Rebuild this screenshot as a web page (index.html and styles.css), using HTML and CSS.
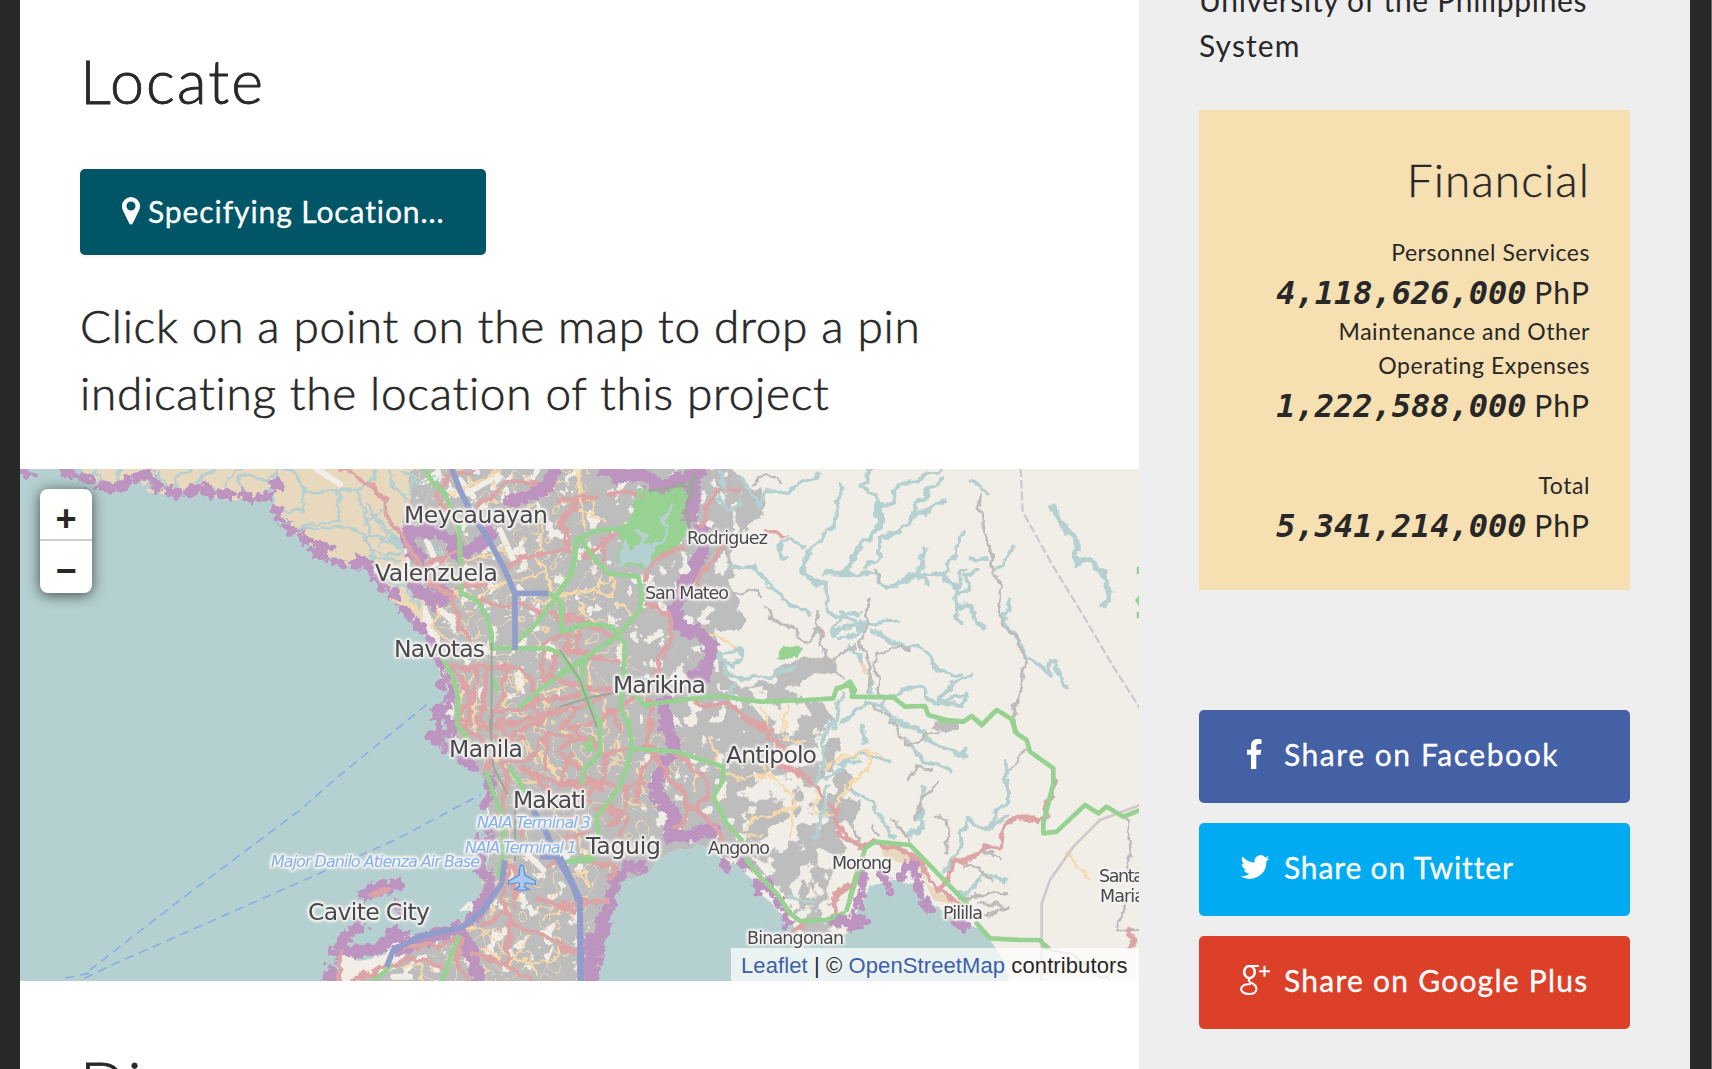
FILE: index.html
```html
<!DOCTYPE html>
<html lang="en">
<head>
<meta charset="utf-8">
<title>Project</title>
<link rel="stylesheet" href="styles.css">
</head>
<body>
<div class="page">
<main class="main">
  <section class="locate">
    <h2 class="title">Locate</h2>
    <button class="btn-locate"><svg class="pin" viewBox="0 0 18 28"><path fill-rule="evenodd" d="M9 0a9 9 0 0 1 9 9c0 2-.5 3.500-1.200 5L10.700 26.500c-.7 1.400-2.700 1.400-3.400 0L1.200 14C.5 12.500 0 11 0 9a9 9 0 0 1 9-9zm0 4.500a4.500 4.500 0 1 0 0 9 4.500 4.500 0 0 0 0-9z"/></svg><span>Specifying Location...</span></button>
    <p class="hint">Click on a point on the map to drop a pin<br>indicating the location of this project</p>
  </section>
  <div class="map">
    <svg class="tiles" viewBox="20 469 1119 512">
      <defs>
        <filter id="specks" x="0" y="0" width="1" height="1" color-interpolation-filters="sRGB"><feTurbulence type="fractalNoise" baseFrequency=".07" numOctaves="4" seed="4"/><feColorMatrix values="0 0 0 0 .945 0 0 0 0 .933 0 0 0 0 .91 22 0 0 0 -13.4"/><feComposite in2="SourceGraphic" operator="in"/></filter>
        <filter id="sprawl" x="0" y="0" width="1" height="1" color-interpolation-filters="sRGB"><feTurbulence type="fractalNoise" baseFrequency=".04" numOctaves="5" seed="9"/><feColorMatrix values="0 0 0 0 .945 0 0 0 0 .933 0 0 0 0 .91 24 0 0 0 -12"/><feComposite in2="SourceGraphic" operator="in"/></filter>
        <filter id="streets" x="0" y="0" width="1" height="1" color-interpolation-filters="sRGB"><feTurbulence type="fractalNoise" baseFrequency=".04" numOctaves="2" seed="21"/><feColorMatrix values="0 0 0 0 .97 0 0 0 0 .85 0 0 0 0 .67 1 0 0 0 0"/><feComponentTransfer><feFuncA type="discrete" tableValues="0 0 0 0 0 0 0 0 0 0 0 0 0 0 0 0 0 1 0 0 0 0 0 0 0 0 0 1 0 0 0 0 0 0 0 0 0 0 0 0"/></feComponentTransfer><feComposite in2="SourceGraphic" operator="in"/></filter>
        <filter id="rough" x="-.1" y="-.1" width="1.2" height="1.2"><feTurbulence type="fractalNoise" baseFrequency=".05" numOctaves="2" seed="2"/><feDisplacementMap in="SourceGraphic" scale="40" xChannelSelector="R" yChannelSelector="G"/></filter>
        <filter id="wobble" x="-.1" y="-.1" width="1.2" height="1.2"><feTurbulence type="fractalNoise" baseFrequency=".06" numOctaves="2" seed="6"/><feDisplacementMap in="SourceGraphic" scale="9" xChannelSelector="R" yChannelSelector="G"/></filter>
        <filter id="bend" x="-.1" y="-.1" width="1.2" height="1.2" color-interpolation-filters="sRGB"><feTurbulence type="fractalNoise" baseFrequency=".025" numOctaves="3" seed="8"/><feDisplacementMap in="SourceGraphic" scale="36" xChannelSelector="R" yChannelSelector="G"/></filter>
      </defs>
      <rect class="sea" x="20" y="469" width="1119" height="512"/>
      <!-- land masses -->
      <g filter="url(#wobble)">
        <path class="land" d="M80 455V478L115 488 137 478 150 493 200 492 228 501 262 498 272 482 275 510 300 538 325 555 350 565 367 560 375 580 400 605 420 630 432 650 440 670 450 690 445 712 452 735 475 765 490 785 486 830 488 870 480 900 465 922 410 938 395 930 385 955 360 960 345 945 335 981V995H597L605 950 613 885 650 872 665 855 695 845 712 850 735 865 755 880 762 895 785 915 800 935 845 935 860 905 870 885 900 880 920 885 927 903 945 912 960 922 980 930 992 945 1005 960 1015 995H1160V455z"/>
        <path class="farm" d="M80 455V478L115 488 137 478 150 493 200 492 228 501 262 498 272 482 275 510 300 538 325 555 350 565 367 560 390 590 420 625 425 605 405 560 402 520 420 500 410 455z"/>
        <path class="urban" d="M408 455 412 500 403 520 408 560 425 600 440 640 452 700 455 735 475 765 490 785 488 870 480 900 465 922 410 940 395 970 340 985 335 995H597L605 950 613 885 650 872 665 855 695 845 712 850 745 865 770 880 790 905 805 935 840 930 825 890 835 870 850 840 862 800 845 760 835 720 820 700 790 690 760 680 740 690 725 670 715 640 705 600 735 575 725 530 760 500 720 455z"/>
        <path class="urban" d="M715 465 740 500 760 485 765 505 745 530 730 555 725 580 740 600 730 615 745 620 735 630 715 630 710 660 725 690 715 700 690 600 700 500z"/>
      </g>
      <path filter="url(#sprawl)" d="M740 690 L800 680 870 700 870 760 860 860 835 935 800 925 770 880 745 850 740 800 770 770 780 740z"/>
      <path filter="url(#specks)" d="M410 469H750L745 570 715 610 720 690 640 690 560 600 560 700 500 720 480 700 440 620 410 560 405 520z M520 850 590 850 590 970 350 975 440 930z M640 690H770L780 740 750 800 760 850H770L640 840z"/>
      <path class="orange-net" filter="url(#streets)" d="M410 469H590L600 600 650 690 690 740 650 840 600 880 590 981H400L480 900 490 780 445 700 430 620z"/>
      <!-- delta channels and meadow rivers, north-west -->
      <g class="thin river" filter="url(#bend)" transform="translate(260 460) scale(.33333)">
        <path d="M80 25 130 80 180 105 220 90 290 95 340 55 350 25M130 80 130 150 60 155M220 90 240 110 235 180 190 185 120 205M110 210 220 205 260 195 320 240 340 300M370 150 330 180 320 240M320 130 350 170 370 210 420 250M330 230 400 240 420 260M330 260 380 290 430 270M350 300 420 300M400 200 360 250M390 30 400 90 440 120M430 30 470 70 530 50M460 70 440 100M480 200 520 270 560 290M350 350 430 380 480 440M390 330 460 390 500 430M330 180 310 150 290 95"/>
        <path d="M-570 70-540 30M-520 80-490 30-480 80M-440 70-420 25M-400 60-350 30M-340 100-330 40-290 60-270 100M-250 90-240 40-200 30M-220 90-180 50-130 30M-160 80-110 100-100 60-60 30M-50 90-70 60-30 40 20 70 60 25M-190 70-160 40M-300 30-310 70-340 80"/>
      </g>
      <!-- north-west quarter -->
      <g transform="translate(260 460) scale(.33333)">
        <path class="pale" d="M170 27 240 72M500 240 530 310M600 60 640 110M720 210 760 300M530 440 620 520M620 100 690 60"/>
        <g class="purple" filter="url(#rough)">
          <path class="coast" d="M-720 30-690 45M-590 25-560 45-520 60-480 75-430 90-390 55-330 40-310 80-250 100-200 95-190 70-150 100-60 100-20 120 30 105 50 65 70 85M45 145 60 185 120 230 170 255 215 262M165 275 240 310 290 315 320 285M320 300 340 340 370 380 400 400 430 445 460 480 490 510 520 560 540 610 560 660 520 690M580 690 570 740 520 750 540 790"/>
          <path class="wide" d="M430 215 470 290 500 350M430 215H540L580 250 600 290 680 240 700 200M740 130 860 85 890 20M450 370 530 430 570 390M490 320 550 400"/>
        </g>
        <g filter="url(#bend)">
        <path class="yellow" d="M570 100 640 75 700 40M860 170 830 280 880 400M640 420 720 370 850 340 870 390M540 440 520 500 580 550M960 30 950 150 990 160M600 300 700 280 740 260M830 430 990 390M400 420 470 440M640 640 600 700 610 790M740 640 850 700 920 680M650 660 640 800M740 670 730 740 850 790M850 650 860 800"/>
        <path class="red" d="M245 30 300 45 375 120 375 170 420 225 470 300 520 370 575 410 590 470 625 540M550 80 530 110 555 150M640 30 560 50 550 80M655 140 750 60 830 65M510 310 600 275M740 325 790 290 850 280 930 270 930 240 910 200 945 120 990 115M660 420 720 440 780 430 850 460 960 480 990 490M850 545 960 520 960 490M850 545 850 670M930 525 920 570 990 585M590 380 680 370M570 625 700 620 790 625 800 660 830 700 830 810M650 630 640 720 620 810M680 630 660 810M740 620 730 700 700 760 690 810M580 630 610 680 640 720 600 760M700 760 780 740 850 720 960 710M740 800 860 760 990 730M890 580 870 650 840 660M890 660 980 680M600 780 700 800 760 790"/>
        </g>
        <path class="green" d="M495 30 520 70 555 100 575 150 595 190 600 270 600 350 605 400 650 420 680 470 695 520 695 565 765 565 865 565 900 580 930 620 960 660 980 740M780 740 850 680 990 590M765 550 830 490 890 410 940 330 945 240 990 220M865 400 890 410 905 430 905 515 990 490M550 600 580 650 595 720 590 810M700 655 710 690"/>
        <path class="trunk" d="M695 550V810"/>
        <path class="blue" d="M575 25 600 90 640 170 680 230 730 320 765 400 765 570M765 400 865 400"/>
      </g>
      <!-- north centre: reservoir and Marikina valley -->
      <g transform="translate(560 460) scale(.33333)">
        <g filter="url(#bend)">
        <path class="town" d="M500 460 540 450 560 480 530 510zM770 500 785 500 795 530 775 535zM540 110 580 100 610 160 550 210 520 150z"/>
        <path class="scrub" d="M640 640 700 600 760 590 830 600 830 640 760 640 720 680 640 680z"/>
        <path class="park" d="M240 95 300 95 340 90 395 50 415 60 370 140 375 230 340 265 270 320 200 320 165 300 180 250 165 210 215 165z"/>
        <path class="lake" d="M165 310 190 230 220 270 250 240 225 210 270 225 255 265 300 240 320 200 305 180 340 125 315 240 280 270 270 315z"/>
        </g>
        <g class="purple" filter="url(#rough)"><path class="wide" d="M110 25 180 50 250 45 300 80 380 50 440 30M400 60 400 120 380 190M420 190 430 270 400 330 360 390 345 450 350 490 420 520 455 560 430 650 380 660M310 710 320 810"/></g>
        <g filter="url(#bend)">
        <path class="grey" d="M280 95 380 70M400 50 380 150 385 210"/>
        <path class="pale" d="M370 280 375 340M460 75 470 90M260 540 300 520"/>
        <path class="yellow" d="M50 30 65 90 60 150 75 200M65 110 100 130 100 170 130 190M0 410 60 390 160 405M120 350 120 400 160 400 160 350 120 370M170 430 210 450 225 470M450 530 490 540 530 565M60 430 100 480M95 600 90 680 140 730 130 800M610 740 630 810M680 730 680 810"/>
        <path class="red" d="M0 120 50 115 110 110M150 100 240 105M50 120 10 180 0 200 30 270M160 225 70 290M130 240V310M540 92 470 90 445 140 430 180 420 205M380 255 340 265 300 300 260 320 250 370M490 260 440 320 410 370M620 210 670 225M255 430 290 440 335 470 335 530 310 590 285 640M0 480 65 480 155 530M25 510 20 580 120 590 130 605 180 608M50 510 60 580M0 660 60 680 160 690M0 800 60 740 150 700M20 810 140 770 230 710M270 720 270 810M410 720 440 740 520 735 560 780 620 810M160 760 180 810"/>
        <path class="greyline" d="M510 405 590 385 600 410M610 440 640 480 700 510 740 545 775 510 770 460M775 510 800 610 850 660M800 600 890 560M580 70 620 40 660 70M480 40 440 80 500 95"/>
        <path class="river" d="M550 60 600 140 620 90 680 95 720 60 760 55 780 40M845 75 830 130 830 180 800 220 760 270 730 290 730 340 770 375 800 370 800 460 850 470 900 460M670 240 660 290 680 290M680 240 730 265M790 335 860 340 880 290 900 260M515 320 580 325 640 380 680 430 740 460M480 600 520 620 550 570 480 580 500 640 560 660 640 650 700 620M520 670 510 720M470 110 510 150 540 130M480 30 490 90M800 370 740 350M850 470 820 520 900 490M850 700 820 800"/>
        <path class="grove" d="M650 600 670 560 720 560 710 590z"/>
        </g>
        <path class="green" d="M0 390 30 350 45 300 50 240 110 212 180 205M65 240 90 280 145 340 235 350 245 400 240 450 170 530 80 590 0 640M0 430 5 515 70 492 130 495 160 505 175 530 195 550 190 640 180 740 205 800M75 590 65 660 80 710 120 800M250 735 400 715 480 708 600 725 740 720 820 715 830 685 870 675 880 710M230 710 260 740M240 90 230 180"/>
        <path class="trunk" d="M0 570 60 660 110 800M0 740 100 710 160 700"/>
      </g>
      <!-- north-east hills -->
      <g transform="translate(840 460) scale(.33333)">
        <g filter="url(#bend)">
        <path class="river" d="M90 30 65 80 105 100 120 140 120 200 60 260 15 340M120 138 165 120 175 75 225 60 300 30M315 48 240 120 215 170 180 215 120 235 115 290 80 300 75 325M215 170 260 150 315 123M0 340 105 340 120 370 155 380 230 345 300 345 345 375 350 430 355 485M250 270 235 345 260 375M365 215 340 290 320 330 300 345M370 335 350 380 350 400 380 400 380 350 410 330M360 440 395 440 400 470 430 500M395 60 435 100M395 300 440 290M515 260 490 315 460 330M510 425 490 470 500 490 540 550 565 595 610 620 628 645 630 600 645 605 655 650 680 685M0 460 40 480 60 510 90 490 170 485M0 540 40 530 60 490M100 510 150 545 200 565 230 555 265 580 290 630 360 647M20 560 60 600 90 640 95 700M130 730 180 690 240 675 260 710 290 730 330 680 395 645M290 730 370 740 380 700 300 730M0 790 90 720 130 740 160 790 230 800"/>
        <path class="river broad" d="M640 140 665 190 705 235 710 310 740 300 770 315 795 350 808 400 790 440M110 130 120 200M50 500 80 490"/>
        <path class="greyline" d="M415 105 430 210 455 280 455 340 485 370 475 430 490 490 525 530 560 595 535 710 520 770M105 320 120 370M85 420 85 490 60 540 70 580 100 620 85 700M115 710 110 580 150 565 210 565M90 725 160 790M0 580 50 555"/>
        <path class="town" d="M280 785 360 780 350 810H280z"/>
        <path class="sand" d="M60 610 85 615 90 640 70 645z"/>
        </g>
        <path class="border" d="M542 25 548 155 640 320 720 450 820 620 900 745"/>
        <path class="green" d="M0 685 30 665 45 690 35 710 160 712 195 740 255 738 265 765 320 780 370 785 395 768 425 795 470 750 520 780 525 815"/>
        <path class="grove" d="M890 320h7v22h-7zM885 420l12-14v34zM890 455h7v20h-7z"/>
      </g>
      <!-- ferry lines -->
      <path class="ferry" d="M85 978 112 965 395 840 480 795M90 970 180 900 300 810 340 775 430 702M66 978 90 973"/>
      <!-- Manila and Cavite -->
      <g transform="translate(260 720) scale(.33333)">
        <g class="purple" filter="url(#rough)"><path class="coast" d="M560 0 590 30 510 50 560 80 610 120 660 150M690 170 690 230 670 260M680 300 690 360 660 360M670 400 650 450 700 470 690 500"/>
          <path class="wide" d="M300 530 350 505 430 490M400 575 420 550M310 610 260 650 230 700 310 690 350 690 400 640 440 650M590 610 630 690 660 790M990 640V790"/><path class="wide" d="M700 500 650 580 600 630 480 660 400 700M225 740 200 790"/></g>
        <path class="redfill" d="M320 525 370 500 400 505 345 535z"/>
        <g filter="url(#bend)">
        <path class="yellow" d="M620 620 700 650 730 700 760 700M740 750 800 650M760 710 830 730 890 720 890 650M820 720 830 760M850 600 910 570M660 680 720 720M430 740 480 740 490 780M780 40 830 130M850 70 880 150M640 10 650 60M900 20 940 60M930 300 980 400M950 460 990 490M700 100 780 190 850 190M830 100 900 180"/>
        <path class="red" d="M600 10 660 60 720 100 740 180 720 290M650 0 720 60 850 0M720 130 800 120 860 40 990 60M780 150 870 180 990 190M800 150 900 240 990 250M930 100 900 180M730 570 760 610 860 650 960 700M640 700 750 740 810 780M750 610 740 740M730 570 670 620M600 660 590 720 630 790M280 780 440 715 550 740M240 700 240 780M440 680 530 675 590 665M740 430 730 560M765 560 765 440 720 430M830 530 940 575 980 540M860 150 860 50M720 0 740 60M780 340 780 300M860 440 900 420M940 290 920 360 990 330M790 50 700 90 680 150"/>
        </g>
        <path class="green" d="M590 10 620 50M680 160 700 220 720 270 730 320 730 400 715 465M595 650 545 785M750 145 800 220M340 785 390 740M990 410 920 425"/>
        <path class="trunk" d="M690 0 700 140 740 220M765 240V420"/>
        <path class="blue" d="M735 420 725 490 670 570 610 620 480 650 400 690 380 740M820 270 860 340 890 410 940 500 960 560 965 790M840 410H900"/>
        <path class="pale" d="M790 390 850 450M400 770 450 770"/>
        <path class="plane" d="M785 435c7 0 8 15 9 30l32 18v10l-30-5-3 12 14 8-20 3-22-3 14-8-3-12-30 5v-10l32-18c0-15 0-30 7-30z"/>
      </g>
      <!-- Taguig, Antipolo and the lake shore -->
      <g transform="translate(560 720) scale(.33333)">
        <g class="purple" filter="url(#rough)"><path class="wide" d="M320 0 345 90 300 160 285 200 310 250 345 280 330 350 380 350 440 330 480 340M190 440 260 440M180 450 140 560 110 700 85 790"/><path class="coast" d="M490 430 500 450M540 430 570 440M590 490 600 510M620 490 660 550M680 580 680 620M820 600 880 620 900 600"/></g>
        <g filter="url(#bend)">
        <path class="yellow" d="M540 340 600 290 700 270 690 350M450 60 480 150 560 180 620 160M600 130 650 180 700 230 700 280M660 0 670 60 740 60M790 150 840 110 900 110M820 260 880 180 900 160M40 460 90 450 80 490M190 240 260 260M410 140 400 220M170 60 190 120M560 350 610 350M760 210 770 280 830 280M230 150 250 220"/>
        <path class="red" d="M0 100 130 210M20 10 140 100 280 80M0 200 110 190 200 200 250 180M140 90 130 170 90 220M40 60 0 90M0 30 30 0M270 0 260 80 330 170 400 260 450 300M350 100 440 180 450 230 390 270 350 330M200 200 200 250 150 320M110 260 190 280M200 290 180 350M570 0 630 20 620 60M630 60 680 90M660 140 740 170 770 200 780 230 830 270 840 340 900 380M820 580 820 530 870 500M0 560 140 540M0 680 50 695M100 430 170 440 150 480M280 90 240 170 230 240M490 360 460 310M700 630 740 610M160 280 150 240"/>
        <path class="river" d="M830 0 790 50 790 120 770 190M760 350 790 290 800 200M690 530 770 545M900 120 850 140 800 180"/>
        <path class="park" d="M65 70 90 55 105 80 80 95z"/>
        </g>
        <path class="green" d="M205 0 215 60 210 110 180 200 110 290 115 340M120 0 120 100 70 150 65 190M215 85 280 90 350 95 490 140 490 180 460 230 500 310 545 360M560 420 600 470 650 520 690 580 720 603 800 600 850 580M30 425 100 420M870 530 890 460"/>
        <path class="blue" d="M0 410 20 450 60 540 60 790"/>
      </g>
      <!-- south-east -->
      <g transform="translate(840 720) scale(.33333)">
        <path class="sand" d="M120 375 200 390 250 430 260 490 360 560 280 540 240 450 130 410z"/>
        <g class="purple" filter="url(#rough)"><path class="coast" d="M220 420 180 470M220 430 240 530 270 570M130 460 150 520M70 460 60 530 40 580M10 600 40 620M350 610 380 620M70 600 50 600"/></g>
        <g filter="url(#bend)">
        <path class="river" d="M75 20 70 70M0 135 60 100 145 118M20 210 90 240 125 300 165 355M248 195 240 330 210 350M150 0 230 20 260 60 370 110 380 80M200 70 250 120 335 152M500 120 505 240 465 280 455 310M505 285 430 330 380 295 350 400 320 450M360 520 410 500 430 460 500 485"/>
        <path class="greyline" d="M150 0 200 75 300 30M205 170 240 140 280 150M300 185 250 230 230 300M0 180 30 210M560 95 510 145M295 290 325 300 320 400M40 320 60 370M90 310 110 350M160 300 210 360M420 390 480 420M370 440 410 440 450 480M360 530 500 520M420 550 500 560 440 590M860 290 870 400 850 480M610 680 700 710 800 780M860 540 830 630 900 630"/>
        <path class="yellow" d="M0 120 90 88 130 105M90 90 80 145 10 225M675 398 700 410 710 445 745 475M895 200V230"/>
        <path class="red" d="M0 340 60 380 100 370 180 385 240 420 270 490 370 555M300 505 330 470 340 425 380 430 430 380 480 385 500 310 550 290 590 310 620 280 645 180M870 630 875 680M0 520 40 490"/>
        </g>
        <path class="rail" d="M900 255 780 300 700 380 630 480 605 550 605 780"/>
        <path class="green" d="M20 570 60 440 75 385 105 365 210 375 380 550M410 610 450 655 540 660 600 660 620 685M300 0 370 5M410 0 425 15M515 0 530 40 560 60 570 95 640 145 640 190 610 310 610 340 650 335 735 255 775 280 800 260 850 290 900 270"/>
      </g>
      <!-- place names -->
      <g class="place">
        <text x="404" y="523" textLength="144">Meycauayan</text><text x="375" y="581" textLength="123">Valenzuela</text><text x="394" y="657" textLength="91">Navotas</text><text x="613" y="693" textLength="93">Marikina</text><text x="449" y="757" textLength="74">Manila</text><text x="513" y="808" textLength="73">Makati</text><text x="586" y="854" textLength="75">Taguig</text><text x="308" y="920" textLength="122">Cavite City</text><text x="726" y="763" textLength="91">Antipolo</text>
      </g>
      <g class="place small">
        <text x="687" y="544" textLength="81">Rodriguez</text><text x="645" y="599" textLength="84">San Mateo</text><text x="708" y="854" textLength="62">Angono</text><text x="747" y="944" textLength="97">Binangonan</text><text x="832" y="869" textLength="60">Morong</text><text x="943" y="919" textLength="40">Pililla</text><text x="1099" y="882" textLength="45">Santa</text><text x="1100" y="902" textLength="45">Maria</text>
      </g>
      <g class="place air">
        <text x="477" y="828" textLength="114">NAIA Terminal 3</text><text x="465" y="853" textLength="112">NAIA Terminal 1</text><text x="271" y="867" textLength="209">Major Danilo Atienza Air Base</text>
      </g>
    </svg>
    <div class="zoom"><span class="zoom-in">+</span><span>−</span></div>
    <div class="credit"><span><a>Leaflet</a> | © <a>OpenStreetMap</a> contributors</span></div>
  </div>
  <section class="discuss"><h2 class="title">Discuss</h2></section>
</main>
<aside class="side">
  <p class="agency">University of the Philippines<br><span class="agency-b">System</span></p>
  <div class="card">
    <h3>Financial</h3>
    <p class="label">Personnel Services</p>
    <p class="amount"><b>4,118,626,000</b> <span>PhP</span></p>
    <p class="label">Maintenance and Other<br>Operating Expenses</p>
    <p class="amount"><b>1,222,588,000</b> <span>PhP</span></p>
    <p class="label total">Total</p>
    <p class="amount"><b>5,341,214,000</b> <span>PhP</span></p>
  </div>
  <div class="share">
    <a class="fb"><svg viewBox="0 0 30 30"><path d="M21.500 .4V5h-2.700c-2 0-2.500 1-2.500 2.400V10.700h5l-.7 5h-4.300V30h-5.300V15.700H7V10.700h4V6.800C11 2.500 13.600 0 17.500 0c1.800 0 3.400.2 4 .4z"/></svg><span>Share on Facebook</span></a>
    <a class="tw"><svg viewBox="0 0 24 24"><path d="M23.500 4.900a9.500 9.500 0 0 1-2.700.75 4.700 4.700 0 0 0 2.100-2.600 9.500 9.500 0 0 1-3 1.150 4.700 4.700 0 0 0-8.100 4.300A13.400 13.400 0 0 1 2.100 3.600a4.700 4.700 0 0 0 1.450 6.300 4.700 4.700 0 0 1-2.130-.6v.06a4.700 4.700 0 0 0 3.780 4.600 4.700 4.700 0 0 1-2.120.08 4.700 4.700 0 0 0 4.400 3.270A9.500 9.500 0 0 1 .5 19.300a13.400 13.400 0 0 0 20.600-11.900 9.500 9.500 0 0 0 2.400-2.500z"/></svg><span>Share on Twitter</span></a>
    <a class="gp"><svg viewBox="0 0 30 30"><g fill="none" stroke="#fff"><ellipse cx="9.500" cy="7" rx="5.300" ry="6" stroke-width="2.600"/><path stroke-width="2" d="M10 1h9M10 13.200c-3 3 .2 4 2.800 5.400 5.200 2.800 5.200 10.400-3.300 10.400-8 0-10.300-5-6.500-8.300 2-1.500 4.500-1.700 8-1.700M24.500.8v11M19 6.300h11"/></g></svg><span>Share on Google Plus</span></a>
  </div>
</aside>
</div>
</body>
</html>
```
FILE: styles.css
```css
* { box-sizing: border-box; }
body { margin: 0; height: 1069px; overflow: hidden; background: #282828; color: #282828; font-family: Lato, "Open Sans", sans-serif; font-variant-ligatures: none; }
h2, h3, p { margin: 0; font-weight: 300; }
.page { display: grid; grid-template-columns: 1119px 551px; width: 1712px; height: 1069px; padding-left: 20px; border-right: 1px solid #6b6b6b; overflow: hidden; }
.main { background: #fff; height: 1069px; overflow: hidden; }
.locate { height: 469px; padding: 44px 60px 0; }
.title { font-size: 61px; line-height: 74px; letter-spacing: 2.1px; -webkit-text-stroke: .8px #282828; }
.btn-locate { display: flex; align-items: center; gap: 8px; width: 406px; height: 86px; margin-top: 51px; padding: 0 0 3px 42px; border: 0; border-radius: 5px; background: #005566; box-shadow: 0 2px 2px #f4f4f4; color: #fff; font: 400 30px/84px Lato, sans-serif; letter-spacing: .9px; -webkit-text-stroke: .3px #fff; white-space: nowrap; font-variant-ligatures: none; }
.pin { width: 18px; height: 28px; fill: #fff; }
.hint { margin-top: 37px; font-size: 46px; line-height: 67px; letter-spacing: .7px; white-space: nowrap; -webkit-text-stroke: .6px #282828; }
.map { position: relative; height: 512px; overflow: hidden; }
.tiles { display: block; width: 1119px; height: 512px; }
.discuss { padding: 65px 60px 0; }

.sea, .lake { fill: #b5d0d0; }
.land { fill: #f1eee8; }
.farm, .sand { fill: #e8d8bd; }
.urban, .town { fill: #bdbdbd; }
.scrub { fill: #bdbdbd; }
.park, .grove { fill: #98d292; }
.redfill { fill: #dca4a4; }
.river, .purple, .pale, .grey, .yellow, .red, .green, .trunk, .blue, .greyline, .border, .ferry, .rail { fill: none; stroke-linejoin: round; stroke-linecap: round; }
.river { stroke: #b5d0d0; stroke-width: 12; }
.thin { stroke-width: 9; }
.broad { stroke-width: 19; }
.purple { stroke: #bc94bf; }
.coast { stroke-width: 30; stroke-dasharray: 30 32; }
.wide { stroke-width: 40; stroke-linecap: butt; }
.pale { stroke: #f1eee8; stroke-width: 18; }
.grey { stroke: #a3a3a3; stroke-width: 14; }
.greyline { stroke: #bdbbba; stroke-width: 8; }
.rail { stroke: #cfc9cb; stroke-width: 8; }
.yellow { stroke: #f8d9aa; stroke-width: 7; }
.orange-net { opacity: .75; }
.red { stroke: #dca4a4; stroke-width: 14; }
.green { stroke: #98d292; stroke-width: 14; }
.trunk { stroke: #9aa79a; stroke-width: 6; }
.blue { stroke: #919dca; stroke-width: 17; stroke-linecap: butt; }
.border { stroke: #cfcaca; stroke-width: 7; stroke-dasharray: 26 9; stroke-linecap: butt; }
.ferry { stroke: #8aaae6; stroke-width: 1.5; stroke-dasharray: 8 7; }
.plane { fill: #a9c8ee; stroke: #5b94dc; stroke-width: 4; }
.place { font: 23.5px "DejaVu Sans", sans-serif; fill: #4a484c; filter: drop-shadow(0 0 1px #f5f4f2) drop-shadow(0 0 1px #f5f4f2) drop-shadow(0 0 1px #f5f4f2) drop-shadow(0 0 1px #f5f4f2); }
.small { font-size: 17.5px; }
.air { font-size: 16px; font-style: italic; fill: #85b1ea; }

.zoom { position: absolute; left: 20px; top: 20px; width: 52px; height: 104px; border-radius: 8px; background: #fff; box-shadow: 0 2px 14px rgba(0, 0, 0, .65); display: grid; grid-template-rows: 52px 52px; text-align: center; font: bold 36px/59px "Liberation Sans", sans-serif; }
.zoom-in { height: 52px; border-bottom: 2px solid #ccc; }
.credit { position: absolute; right: 0; bottom: 0; width: 408px; height: 33px; padding-left: 10px; background: rgba(255, 255, 255, .72); font: 22px/35px "Liberation Sans", sans-serif; letter-spacing: .1px; white-space: nowrap; }
.credit a { color: #3f5fa8; }

.side { background: #eee; padding: 0 60px; height: 1069px; overflow: hidden; }
.agency { height: 112px; margin-top: -22px; font-size: 30px; line-height: 45px; letter-spacing: .68px; font-weight: 400; white-space: nowrap; }
.agency-b { letter-spacing: 1.1px; }
.card { width: 431px; height: 480px; margin-top: 20px; padding: 39px 40px 0 20px; background: #f6dfb0; text-align: right; }
.card h3 { font-size: 46px; line-height: 62px; margin-bottom: 24px; letter-spacing: 1.1px; -webkit-text-stroke: .4px #282828; }
.label { font-size: 23px; line-height: 34px; letter-spacing: .55px; font-weight: 400; }
.amount { height: 45px; font-size: 30px; line-height: 46px; font-weight: 400; white-space: nowrap; }
.amount span { letter-spacing: 1.1px; }
.amount b { font: italic bold 32px/45px "DejaVu Sans Mono", monospace; }
.total { margin-top: 41px; }
.share { display: grid; gap: 20px; margin-top: 120px; }
.share a { display: flex; align-items: center; height: 93px; padding: 0 0 5px 41px; border-radius: 5px; color: #fff; font-size: 30px; letter-spacing: 1.25px; -webkit-text-stroke: .3px #fff; white-space: nowrap; }
.share svg { width: 30px; height: 30px; margin-right: 14px; fill: #fff; }
.share .fb { letter-spacing: 1.55px; }
.share .tw { letter-spacing: .85px; }
.fb { background: #4461a5; }
.tw { background: #00abf2; }
.gp { background: #dd4029; }
```
